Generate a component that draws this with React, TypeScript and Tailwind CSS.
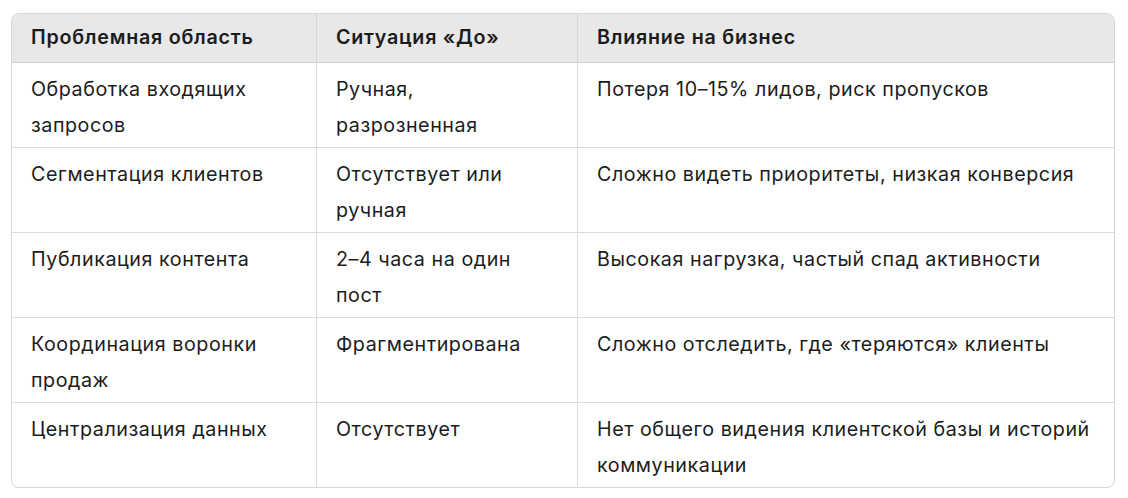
const rows: [string, string, string][] = [
  ["Обработка входящих запросов", "Ручная, разрозненная", "Потеря 10–15% лидов, риск пропусков"],
  ["Сегментация клиентов", "Отсутствует или ручная", "Сложно видеть приоритеты, низкая конверсия"],
  ["Публикация контента", "2–4 часа на один пост", "Высокая нагрузка, частый спад активности"],
  ["Координация воронки продаж", "Фрагментирована", "Сложно отследить, где «теряются» клиенты"],
  ["Централизация данных", "Отсутствует", "Нет общего видения клиентской базы и историй коммуникации"],
];

const headers = ["Проблемная область", "Ситуация «До»", "Влияние на бизнес"];

export default function App() {
  return (
    <div className="min-h-screen bg-white px-[11px] pt-[13px] font-['Inter',sans-serif] text-[19.7px] tracking-[0.55px] text-[#1c1c1c]">
      <div className="w-[1104px] overflow-hidden rounded-[8px] border border-[#d6d6d6]">
        <div className="grid grid-cols-[304px_261px_1fr] bg-[#e8e8e8] border-b border-[#cfcfcf]">
          {headers.map((h, i) => (
            <div
              key={h}
              className={`h-[48px] flex items-center px-[19px] font-semibold tracking-[0.75px] ${i > 0 ? "border-l border-[#d6d6d6]" : ""}`}
            >
              {h}
            </div>
          ))}
        </div>
        {rows.map((r, ri) => (
          <div
            key={ri}
            className={`grid grid-cols-[304px_261px_1fr] ${ri < rows.length - 1 ? "border-b border-[#dcdcdc]" : ""}`}
          >
            {r.map((c, i) => (
              <div
                key={i}
                className={`h-[84px] px-[19px] pt-[8px] leading-[36px] ${i > 0 ? "border-l border-[#dcdcdc]" : ""}`}
              >
                {c}
              </div>
            ))}
          </div>
        ))}
      </div>
    </div>
  );
}
